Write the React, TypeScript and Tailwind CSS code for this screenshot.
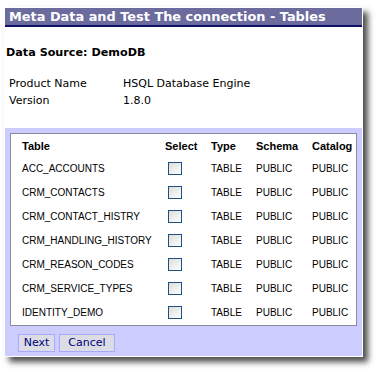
import React from "react";

const rows = [
  "ACC_ACCOUNTS",
  "CRM_CONTACTS",
  "CRM_CONTACT_HISTRY",
  "CRM_HANDLING_HISTORY",
  "CRM_REASON_CODES",
  "CRM_SERVICE_TYPES",
  "IDENTITY_DEMO",
];

const verdana = { fontFamily: '"DejaVu Sans", Verdana, sans-serif' };
const arial = { fontFamily: '"Liberation Sans", Arial, sans-serif' };

export default function App() {
  return (
    <div className="w-[375px] h-[372px] bg-white overflow-hidden pl-[4px] pt-[7px]">
      <div className="w-[359px] bg-white p-[1px] shadow-[5px_5px_6px_rgba(0,0,0,0.7)]">
        <div
          className="h-[19px] bg-[#6b6b9e] border-b-2 border-[#10106b] pl-[4px] text-white font-bold text-[12.9px] leading-[17px]"
          style={verdana}
        >
          Meta Data and Test The connection - Tables
        </div>
        <div className="pl-[1px] pt-[19px] text-[11px] text-black" style={verdana}>
          <div className="font-bold text-[11.2px] leading-[14px]">Data Source: DemoDB</div>
          <div className="mt-[15px] pl-[3px] leading-[17px]">
            <div className="flex">
              <span className="w-[114px]">Product Name</span>
              <span>HSQL Database Engine</span>
            </div>
            <div className="flex">
              <span className="w-[114px]">Version</span>
              <span>1.8.0</span>
            </div>
          </div>
        </div>
        <div className="mt-[19px] bg-[#ccccff] pt-[5px] pb-[4px] pl-[5px] pr-[5px]">
          <div className="bg-white border border-[#8a8a9a] pt-[3px] pl-[11px]" style={arial}>
            <div className="grid grid-cols-[143px_46px_45px_56px_auto] items-center">
              <div className="h-[19px] flex items-center font-bold text-[11px]">Table</div>
              <div className="h-[19px] flex items-center font-bold text-[11px]">Select</div>
              <div className="h-[19px] flex items-center font-bold text-[11px]">Type</div>
              <div className="h-[19px] flex items-center font-bold text-[11px]">Schema</div>
              <div className="h-[19px] flex items-center font-bold text-[11px]">Catalog</div>
              {rows.map((r) => (
                <React.Fragment key={r}>
                  <div className="h-[24px] flex items-center text-[10px]">{r}</div>
                  <div className="h-[24px] flex items-center">
                    <div className="ml-[3px] w-[14px] h-[13px] border border-[#1c5180] bg-gradient-to-br from-[#dcdcd7] to-white" />
                  </div>
                  <div className="h-[24px] flex items-center text-[10px]">TABLE</div>
                  <div className="h-[24px] flex items-center text-[10px]">PUBLIC</div>
                  <div className="h-[24px] flex items-center text-[10px]">PUBLIC</div>
                </React.Fragment>
              ))}
            </div>
            <div className="h-[1px]" />
          </div>
          <div className="flex gap-[4px] mt-[8px] ml-[8px]" style={verdana}>
            <button className="h-[18px] w-[37px] border border-[#a8a8ff] bg-[#dcdce4] text-[#000080] text-[11px] leading-[16px]">
              Next
            </button>
            <button className="h-[18px] w-[56px] border border-[#a8a8ff] bg-[#dcdce4] text-[#000080] text-[11px] leading-[16px]">
              Cancel
            </button>
          </div>
        </div>
      </div>
    </div>
  );
}
